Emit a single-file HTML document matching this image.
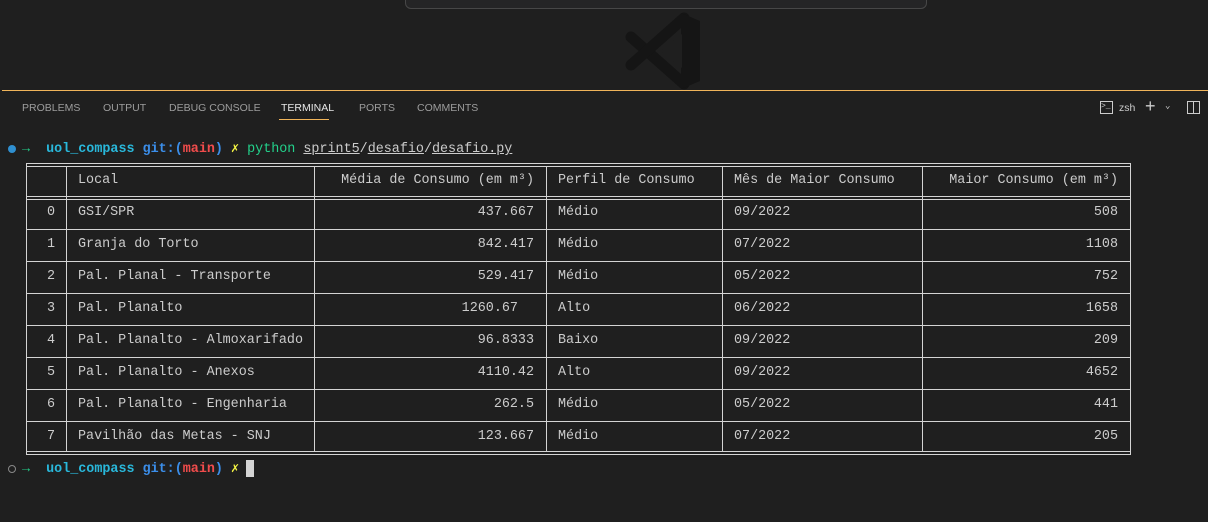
<!DOCTYPE html>
<html><head><meta charset="utf-8"><style>
body{margin:0;width:1208px;height:522px;background:#1f1f1f;overflow:hidden;position:relative;font-family:"Liberation Mono",monospace;font-size:13.4px;color:#cccccc}
.a{position:absolute;white-space:pre}
.h{position:absolute;height:1px;background:#d4d4d4}
.v{position:absolute;width:1px;background:#d4d4d4}
.tab{position:absolute;top:102px;font-family:"Liberation Sans",sans-serif;font-size:10.5px;color:#9d9d9d}
.r{text-align:right}
</style></head><body>
<div style="position:absolute;left:405px;top:-12px;width:520px;height:19px;border:1px solid #474747;border-radius:6px;background:#252526"></div>
<div class="a" style="left:356px;top:-8px;color:#999;font-size:11px">&lt; &gt;</div>
<svg style="position:absolute;left:0;top:0" width="1208" height="95">
<line x1="631" y1="37" x2="684" y2="84" stroke="#151515" stroke-width="11" stroke-linecap="round"/>
<line x1="631" y1="65" x2="684" y2="18" stroke="#151515" stroke-width="11" stroke-linecap="round"/>
<path d="M681 13 L700 21 L700 81 L681 89 Z" fill="#151515"/>
<path d="M660 51 L682 34 L682 68 Z" fill="#1f1f1f"/>
</svg>
<div style="position:absolute;left:2px;top:90px;width:1206px;height:1px;background:#f0b45a"></div>
<div class="tab" style="left:22px">PROBLEMS</div>
<div class="tab" style="left:103px">OUTPUT</div>
<div class="tab" style="left:169px">DEBUG CONSOLE</div>
<div class="tab" style="left:281px;color:#e7e7e7">TERMINAL</div>
<div style="position:absolute;left:279px;top:119px;width:50px;height:1px;background:#f0b45a"></div>
<div class="tab" style="left:359px">PORTS</div>
<div class="tab" style="left:417px">COMMENTS</div>
<div style="position:absolute;left:1100px;top:101px;width:13px;height:13px;border:1px solid #ccc;box-sizing:border-box;font-size:8px;line-height:10px;color:#ccc">&gt;_</div>
<div class="tab" style="left:1119px;color:#ccc">zsh</div>
<div class="a" style="left:1145px;top:96px;font-size:18px;color:#ccc;font-family:'Liberation Sans'">+</div>
<div class="a" style="left:1165px;top:101px;font-size:9px;color:#ccc">⌄</div>
<div style="position:absolute;left:1187px;top:101px;width:13px;height:13px;border:1px solid #ccc;box-sizing:border-box"><div style="position:absolute;left:5px;top:0;width:1px;height:11px;background:#ccc"></div></div>

<div style="position:absolute;left:8px;top:145px;width:8px;height:8px;border-radius:50%;background:#2f8fd0"></div>
<div class="a" style="left:22px;top:141px"><b style="color:#23d18b">→</b>  <b style="color:#29b8db">uol_compass</b> <b style="color:#3b8eea">git:(</b><b style="color:#f14c4c">main</b><b style="color:#3b8eea">)</b> <b style="color:#f5f543">✗</b> <span style="color:#23d18b">python</span> <u>sprint5</u>/<u>desafio</u>/<u>desafio.py</u></div>

<div class="h" style="left:26px;top:163px;width:1105px"></div>
<div class="h" style="left:26px;top:166px;width:1105px"></div>
<div class="h" style="left:26px;top:196px;width:1105px"></div>
<div class="h" style="left:26px;top:199px;width:1105px"></div>
<div class="h" style="left:26px;top:229px;width:1105px"></div>
<div class="h" style="left:26px;top:261px;width:1105px"></div>
<div class="h" style="left:26px;top:293px;width:1105px"></div>
<div class="h" style="left:26px;top:325px;width:1105px"></div>
<div class="h" style="left:26px;top:357px;width:1105px"></div>
<div class="h" style="left:26px;top:389px;width:1105px"></div>
<div class="h" style="left:26px;top:421px;width:1105px"></div>
<div class="h" style="left:26px;top:451px;width:1105px"></div>
<div class="h" style="left:26px;top:454px;width:1105px"></div>
<div class="v" style="left:26px;top:163px;height:292px"></div>
<div class="v" style="left:1130px;top:163px;height:292px"></div>
<div class="v" style="left:66px;top:166px;height:285px"></div>
<div class="v" style="left:314px;top:166px;height:285px"></div>
<div class="v" style="left:546px;top:166px;height:285px"></div>
<div class="v" style="left:722px;top:166px;height:285px"></div>
<div class="v" style="left:922px;top:166px;height:285px"></div>

<div class="a" style="left:78px;top:173px">Local</div>
<div class="a r" style="left:320px;width:214px;top:173px">Média de Consumo (em m³)</div>
<div class="a" style="left:558px;top:173px">Perfil de Consumo</div>
<div class="a" style="left:734px;top:173px">Mês de Maior Consumo</div>
<div class="a r" style="left:930px;width:188px;top:173px">Maior Consumo (em m³)</div>

<div class="a r" style="left:30px;width:25px;top:197px;line-height:32px">0
1
2
3
4
5
6
7</div>
<div class="a" style="left:78px;top:197px;line-height:32px">GSI/SPR
Granja do Torto
Pal. Planal - Transporte
Pal. Planalto
Pal. Planalto - Almoxarifado
Pal. Planalto - Anexos
Pal. Planalto - Engenharia
Pavilhão das Metas - SNJ</div>
<div class="a r" style="left:320px;width:214px;top:197px;line-height:32px">437.667
842.417
529.417
1260.67  
96.8333
4110.42
262.5
123.667</div>
<div class="a" style="left:558px;top:197px;line-height:32px">Médio
Médio
Médio
Alto
Baixo
Alto
Médio
Médio</div>
<div class="a" style="left:734px;top:197px;line-height:32px">09/2022
07/2022
05/2022
06/2022
09/2022
09/2022
05/2022
07/2022</div>
<div class="a r" style="left:930px;width:188px;top:197px;line-height:32px">508
1108
752
1658
209
4652
441
205</div>

<div style="position:absolute;left:8px;top:465px;width:6px;height:6px;border-radius:50%;border:1px solid #888"></div>
<div class="a" style="left:22px;top:461px"><b style="color:#23d18b">→</b>  <b style="color:#29b8db">uol_compass</b> <b style="color:#3b8eea">git:(</b><b style="color:#f14c4c">main</b><b style="color:#3b8eea">)</b> <b style="color:#f5f543">✗</b> </div>
<div style="position:absolute;left:246px;top:460px;width:8px;height:17px;background:#d4d4d4"></div>
</body></html>
